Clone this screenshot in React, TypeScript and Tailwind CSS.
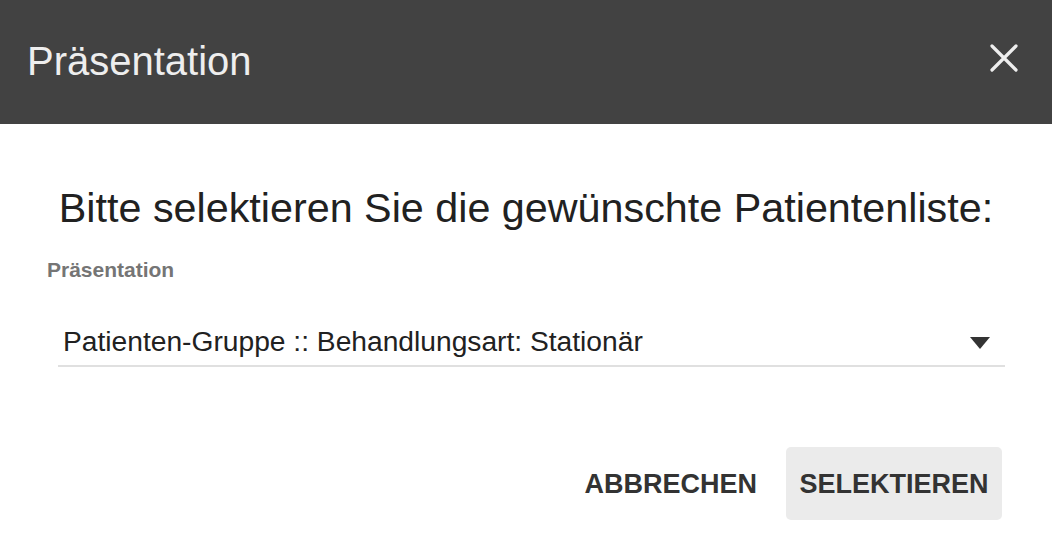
import React from 'react';

const font = { fontFamily: '"Liberation Sans", Arial, sans-serif' };

const CloseIcon: React.FC = () => (
  <svg width="28" height="28" viewBox="0 0 28 28" fill="none">
    <path d="M2 2 L26 26 M26 2 L2 26" stroke="#eeeeee" strokeWidth="3.2" strokeLinecap="round" />
  </svg>
);

const App: React.FC = () => {
  return (
    <div className="w-[1052px] h-[534px] bg-white overflow-hidden" style={font}>
      <div className="h-[124px] bg-[#424242] flex items-center justify-between pl-[27px] pr-[34px]">
        <h2 className="text-[40px] leading-[48px] text-[#eeeeee] font-normal mt-[-3px]">Präsentation</h2>
        <button className="flex items-center justify-center mt-[-9px]">
          <CloseIcon />
        </button>
      </div>

      <div className="px-[47px] pt-[60px]">
        <h1 className="text-[41.3px] leading-[48px] text-[#212121] text-center font-normal">
          Bitte selektieren Sie die gewünschte Patientenliste:
        </h1>

        <div className="mt-[26px] text-[21px] leading-[24px] font-bold text-[#757575]">Präsentation</div>

        <div className="ml-[11px] mt-[43px] flex items-center justify-between border-b-2 border-[#e0e0e0] pl-[5px] pr-[15px] pb-[8px]">
          <span className="text-[28.2px] leading-[32px] text-[#212121]">Patienten-Gruppe :: Behandlungsart: Stationär</span>
          <svg width="20" height="12" viewBox="0 0 20 12" className="mt-[3px]">
            <polygon points="0,0 20,0 10,12" fill="#333333" />
          </svg>
        </div>

        <div className="flex justify-end items-center gap-[29px] mt-[80px] mr-[3px]">
          <button className="text-[27px] leading-[30px] font-bold text-[#333333]">ABBRECHEN</button>
          <button className="h-[73px] w-[216px] rounded-[5px] bg-[#ebebeb] text-[27px] leading-[30px] font-bold text-[#333333]">
            SELEKTIEREN
          </button>
        </div>
      </div>
    </div>
  );
};

export default App;
